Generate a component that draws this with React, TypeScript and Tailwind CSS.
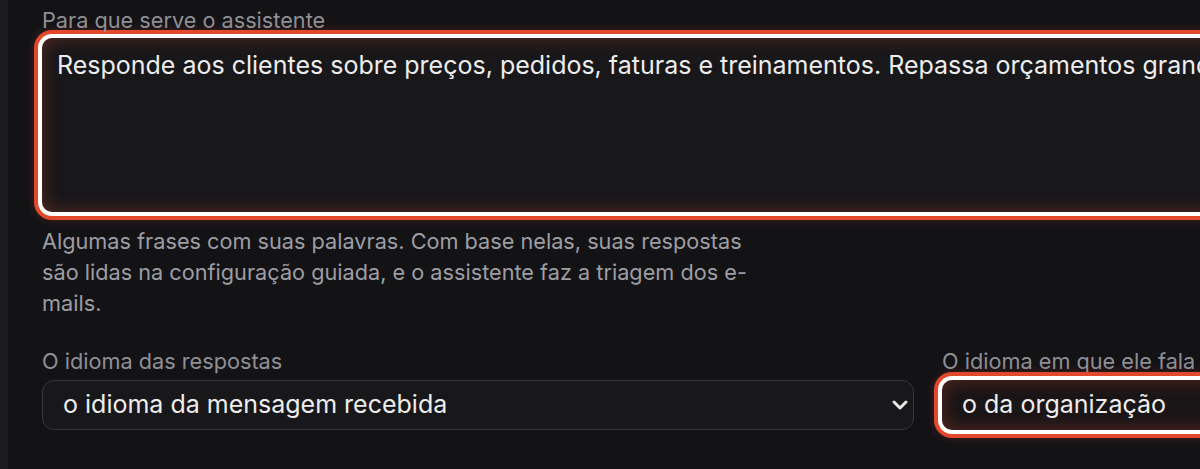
import { ChevronDown } from "lucide-react";

const highlight =
  "shadow-[inset_0_0_18px_rgba(226,84,52,0.32),0_0_0_4px_#ffffff,0_0_0_8px_#e2482b,0_0_8px_8px_rgba(226,72,43,0.25)]";

export default function App() {
  return (
    <div
      className="flex h-[469px] w-full overflow-hidden bg-[#131316] text-[#ededed]"
      style={{ fontFamily: "Inter, 'Noto Sans', sans-serif" }}
    >
      <div className="w-[8px] shrink-0 bg-[#1b1b1e]" />
      <main className="shrink-0 pl-[34px] pt-[7px]">
        <div className="w-[1772px]">
          <label className="block text-[21.7px] leading-[27px] text-[#8f8f95]">
            Para que serve o assistente
          </label>
          <textarea
            readOnly
            defaultValue="Responde aos clientes sobre preços, pedidos, faturas e treinamentos. Repassa orçamentos grandes para a equipe comercial."
            className={`mt-[4px] block h-[174px] w-full resize-none rounded-[10px] bg-[#18171a] px-[15px] py-[10px] text-[25px] leading-[34px] text-[#ededed] outline-none ${highlight}`}
          />
          <p className="mt-[14px] max-w-[716px] text-[21.7px] leading-[31px] text-[#9d9da3]">
            Algumas frases com suas palavras. Com base nelas, suas respostas são
            lidas na configuração guiada, e o assistente faz a triagem dos
            e-mails.
          </p>

          <div className="mt-[29px] grid grid-cols-2 gap-[28px]">
            <div>
              <label className="block text-[21.7px] leading-[27px] text-[#8f8f95]">
                O idioma das respostas
              </label>
              <div className="relative mt-[5px]">
                <select className="block h-[50px] w-full appearance-none rounded-[12px] border border-[#38383c] bg-[#18181b] pl-[20px] pr-[40px] text-[25px] text-[#ededed] outline-none">
                  <option>o idioma da mensagem recebida</option>
                  <option>o idioma da organização</option>
                </select>
                <ChevronDown
                  size={24}
                  strokeWidth={3}
                  className="pointer-events-none absolute right-[2px] top-[13px] text-[#e8e8e8]"
                />
              </div>
            </div>
            <div>
              <label className="block text-[21.7px] leading-[27px] text-[#8f8f95]">
                O idioma em que ele fala
              </label>
              <div className="relative mt-[5px]">
                <select
                  className={`block h-[50px] w-full appearance-none rounded-[10px] bg-[#1a1517] pl-[20px] pr-[40px] text-[25px] text-[#ededed] outline-none ${highlight}`}
                >
                  <option>o da organização</option>
                  <option>o da mensagem recebida</option>
                </select>
                <ChevronDown
                  size={24}
                  strokeWidth={3}
                  className="pointer-events-none absolute right-[2px] top-[13px] text-[#e8e8e8]"
                />
              </div>
            </div>
          </div>
        </div>
      </main>
    </div>
  );
}
